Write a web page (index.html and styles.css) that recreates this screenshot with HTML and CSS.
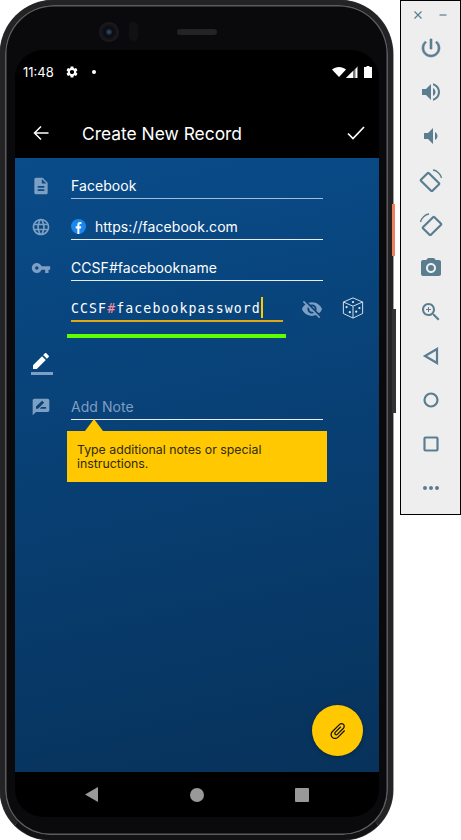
FILE: index.html
```html
<!DOCTYPE html>
<html>
  <head>
    <meta charset="UTF-8">
    <title>Create New Record</title>
    <link rel="stylesheet" href="styles.css">
  </head>

  <body>
    <div id="stage">
      <div id="phone">
        <div class="side-key side-key--orange"></div>
        <div class="side-key side-key--dark"></div>
        <div id="bezel-top">
          <div class="camera"></div>
          <div class="sensor"></div>
          <div class="speaker"></div>
        </div>

        <div id="screen">
          <div id="status">
            <span class="clock">11:48</span>
            <svg class="status__gear" viewBox="0 0 24 24"><path d="M19.14 12.94c.04-.3.06-.61.06-.94 0-.32-.02-.64-.07-.94l2.03-1.58c.18-.14.23-.41.12-.61l-1.92-3.32c-.12-.22-.37-.29-.59-.22l-2.39.96c-.5-.38-1.03-.7-1.62-.94l-.36-2.54c-.04-.24-.24-.41-.48-.41h-3.84c-.24 0-.43.17-.47.41l-.36 2.54c-.59.24-1.13.57-1.62.94l-2.39-.96c-.22-.08-.47 0-.59.22L2.74 8.87c-.12.21-.08.47.12.61l2.03 1.58c-.05.3-.09.63-.09.94s.02.64.07.94l-2.03 1.58c-.18.14-.23.41-.12.61l1.92 3.32c.12.22.37.29.59.22l2.39-.96c.5.38 1.03.7 1.62.94l.36 2.54c.05.24.24.41.48.41h3.84c.24 0 .44-.17.47-.41l.36-2.54c.59-.24 1.13-.56 1.62-.94l2.39.96c.22.08.47 0 .59-.22l1.92-3.32c.12-.22.07-.47-.12-.61l-2.01-1.58zM12 15.6c-1.98 0-3.6-1.62-3.6-3.6s1.62-3.6 3.6-3.6 3.6 1.62 3.6 3.6-1.62 3.6-3.6 3.6z"/></svg>
            <span class="status__dot"></span>
            <span class="status__space"></span>
            <svg class="status__wifi" viewBox="0 0 14 10"><path d="M0 2.6C2 1 4.400 0 7 0s5 1 7 2.600L7 10z"/></svg>
            <svg class="status__signal" viewBox="0 0 12 12"><path d="M12 0v12H0z" fill="#777"/><path d="M7 5v7H0z"/><path d="M11 1.500v10.500H9.500V3z"/></svg>
            <svg class="status__battery" viewBox="0 0 8 12"><path d="M2.500 0h3v1H8v11H0V1h2.500z"/></svg>
          </div>

          <div id="appbar">
            <svg class="appbar__back" viewBox="0 0 16 16"><path d="M15.500 8H1.500M8 1.500 1.500 8 8 14.500"/></svg>
            <div class="appbar__title">Create New Record</div>
            <svg class="appbar__ok" viewBox="0 0 18 14"><path d="M1 7.500 6 12.500 17 1"/></svg>
          </div>

          <div id="content">
            <div class="row">
              <svg class="row__icon" viewBox="0 0 24 24"><path d="M14 2H6c-1.100 0-1.990.9-1.990 2L4 20c0 1.100.89 2 1.990 2H18c1.100 0 2-.9 2-2V8l-6-6zm2 16H8v-2h8v2zm0-4H8v-2h8v2zm-3-5V3.500L18.500 9H13z"/></svg>
              <div class="field field--title">Facebook</div>
            </div>
            <div class="row">
              <svg class="row__icon" viewBox="0 0 24 24"><path d="M11.990 2C6.470 2 2 6.480 2 12s4.470 10 9.990 10C17.520 22 22 17.520 22 12S17.520 2 11.990 2zm6.930 6h-2.950c-.32-1.250-.78-2.450-1.380-3.560 1.840.63 3.370 1.910 4.330 3.560zM12 4.040c.83 1.200 1.480 2.530 1.910 3.960h-3.820c.43-1.430 1.080-2.760 1.910-3.960zM4.260 14C4.100 13.360 4 12.690 4 12s.1-1.360.26-2h3.380c-.08.66-.14 1.320-.14 2 0 .68.06 1.340.14 2H4.260zm.82 2h2.950c.32 1.250.78 2.450 1.380 3.560-1.840-.63-3.370-1.900-4.330-3.560zm2.950-8H5.080c.96-1.660 2.490-2.930 4.330-3.560C8.810 5.550 8.350 6.750 8.030 8zM12 19.960c-.83-1.200-1.480-2.530-1.910-3.960h3.820c-.43 1.430-1.080 2.760-1.910 3.960zM14.340 14H9.660c-.09-.66-.16-1.320-.16-2 0-.68.07-1.350.16-2h4.680c.09.65.16 1.320.16 2 0 .68-.07 1.340-.16 2zm.25 5.560c.6-1.110 1.060-2.310 1.380-3.560h2.950c-.96 1.650-2.490 2.930-4.330 3.560zM16.360 14c.08-.66.14-1.320.14-2 0-.68-.06-1.340-.14-2h3.380c.16.64.26 1.310.26 2s-.1 1.360-.26 2h-3.380z"/></svg>
              <div class="field">
                <svg class="field__fb" viewBox="0 0 16 16"><circle cx="8" cy="8" r="8" fill="#1a86f0"/><path d="M6.800 16V10H5V7.700h1.800V6c0-1.900 1.100-2.900 2.800-2.900.8 0 1.500.1 1.500.1v2h-1c-.9 0-1.200.6-1.200 1.200v1.300h2.100L10.700 10H8.900v6z" fill="#fff"/></svg>
                https://facebook.com
              </div>
            </div>
            <div class="row">
              <svg class="row__icon" viewBox="0 0 24 24"><path d="M12.650 10C11.830 7.670 9.610 6 7 6c-3.310 0-6 2.690-6 6s2.690 6 6 6c2.610 0 4.830-1.670 5.650-4H17v4h4v-4h2v-4H12.650zM7 14c-1.100 0-2-.9-2-2s.9-2 2-2 2 .9 2 2-.9 2-2 2z"/></svg>
              <div class="field">CCSF#facebookname</div>
            </div>
            <div class="row">
              <div class="row__icon"></div>
              <div class="field field--focus">CCSF<span class="hash">#</span>facebookpassword<span class="caret"></span></div>
              <svg class="row__eye" viewBox="0 0 24 24"><path d="M12 7c2.760 0 5 2.240 5 5 0 .65-.13 1.260-.36 1.830l2.920 2.920c1.510-1.260 2.700-2.890 3.430-4.750-1.730-4.390-6-7.500-11-7.500-1.400 0-2.740.25-3.980.7l2.160 2.160C10.740 7.130 11.350 7 12 7zM2 4.270l2.280 2.280.46.46C3.080 8.300 1.780 10.020 1 12c1.730 4.390 6 7.500 11 7.500 1.550 0 3.030-.3 4.380-.84l.42.42L19.730 22 21 20.730 3.270 3 2 4.270zM7.530 9.800l1.550 1.550c-.05.21-.08.43-.08.65 0 1.660 1.340 3 3 3 .22 0 .44-.03.65-.08l1.550 1.550c-.67.33-1.410.53-2.200.53-2.760 0-5-2.240-5-5 0-.79.2-1.530.53-2.200zm4.310-.78 3.150 3.150.02-.16c0-1.660-1.340-3-3-3l-.17.01z"/></svg>
              <svg class="row__dice" viewBox="0 0 24 24" fill="none" stroke="#e4ecf4" stroke-width="1"><path d="M12 1 22.500 5.500V18L12 23 1.500 18V5.500z"/><path d="M1.500 5.500 12 10l10.500-4.500M12 10v13"/><g fill="#e4ecf4" stroke="none"><circle cx="12" cy="5.500" r="1.200"/><circle cx="5" cy="11" r="1.200"/><circle cx="8.500" cy="16.500" r="1.200"/><circle cx="15.500" cy="16" r="1.200"/><circle cx="19" cy="12" r="1.200"/></g></svg>
            </div>
            <div class="strength"></div>
            <div class="row row--pencil">
              <svg class="row__pencil" viewBox="0 0 24 24"><path class="pencil__bar" d="M2 21h22v3H2z"/><path d="M13.060 5.190l3.750 3.750L7.750 18H4v-3.750l9.060-9.060zm4.820 2.680-3.750-3.750 1.830-1.830c.39-.39 1.020-.39 1.410 0l2.340 2.340c.39.39.39 1.020 0 1.410l-1.830 1.830z"/></svg>
            </div>
            <div class="row row--note">
              <svg class="row__icon" viewBox="0 0 24 24"><path d="M20 2H4c-1.100 0-1.990.9-1.990 2L2 22l4-4h14c1.100 0 2-.9 2-2V4c0-1.100-.9-2-2-2zM6 14v-2.470l6.880-6.880c.2-.2.51-.2.71 0l1.770 1.770c.2.2.2.51 0 .71L8.470 14H6zm12 0h-7.500l2-2H18v2z"/></svg>
              <div class="field field--empty">Add Note</div>
            </div>
            <div class="tip">Type additional notes or special instructions.</div>

            <div id="fab">
              <svg viewBox="0 0 24 24"><path transform="rotate(45 12 12)" d="M16.500 6v11.500c0 2.210-1.790 4-4 4s-4-1.790-4-4V5c0-1.380 1.120-2.500 2.500-2.500s2.500 1.120 2.500 2.500v10.500c0 .55-.45 1-1 1s-1-.45-1-1V6H10v9.500c0 1.380 1.120 2.500 2.500 2.500s2.500-1.120 2.500-2.500V5c0-2.210-1.790-4-4-4S7 2.790 7 5v12.500c0 3.040 2.460 5.500 5.500 5.500s5.500-2.460 5.500-5.500V6h-1.500z"/></svg>
            </div>
          </div>

          <div id="navbar">
            <svg viewBox="0 0 14 16"><path d="M14 0v16L0 8z"/></svg>
            <span class="nav__home"></span>
            <span class="nav__recent"></span>
          </div>
        </div>
      </div>

      <div id="tools">
        <div class="tools__head">
          <svg viewBox="0 0 10 10"><path d="M1.500 1.500l7 7M8.500 1.500l-7 7"/></svg>
          <svg viewBox="0 0 10 10"><path d="M1.500 5h7"/></svg>
        </div>
        <svg class="tool tool--heavy" viewBox="0 0 24 24"><path d="M13 3h-2v10h2V3zm4.830 2.170-1.420 1.420C17.990 7.860 19 9.810 19 12c0 3.870-3.130 7-7 7s-7-3.130-7-7c0-2.190 1.010-4.140 2.580-5.420L6.170 5.170C4.230 6.820 3 9.260 3 12c0 4.970 4.030 9 9 9s9-4.030 9-9c0-2.740-1.230-5.180-3.170-6.830z"/></svg>
        <svg class="tool" viewBox="0 0 24 24"><path d="M3 9v6h4l5 5V4L7 9H3zm13.500 3c0-1.770-1.020-3.290-2.500-4.030v8.050c1.480-.73 2.500-2.250 2.500-4.020zM14 3.230v2.060c2.890.86 5 3.540 5 6.710s-2.110 5.850-5 6.710v2.060c4.010-.91 7-4.490 7-8.770s-2.990-7.860-7-8.770z"/></svg>
        <svg class="tool" viewBox="0 0 24 24"><path d="M5 9v6h4l5 5V4L9 9H5zm13.500 3c0-1.770-1.020-3.290-2.500-4.030v8.050c1.480-.73 2.500-2.250 2.500-4.020z"/></svg>
        <svg class="tool tool--line" viewBox="0 0 24 24"><rect transform="rotate(-45 11 14)" x="5.500" y="6" width="11" height="16" rx="1"/><path class="tool__arc" d="M14 2c4 .4 7.600 4 8.500 8"/></svg>
        <svg class="tool tool--line" viewBox="0 0 24 24"><rect transform="rotate(45 13 14)" x="7.500" y="6" width="11" height="16" rx="1"/><path class="tool__arc" d="M10 2C6 2.400 2.400 6 1.500 10"/></svg>
        <svg class="tool" viewBox="0 0 24 24"><path d="M9 2 7.170 4H4c-1.100 0-2 .9-2 2v12c0 1.100.9 2 2 2h16c1.100 0 2-.9 2-2V6c0-1.100-.9-2-2-2h-3.170L15 2H9zm3 15c-2.760 0-5-2.240-5-5s2.240-5 5-5 5 2.240 5 5-2.240 5-5 5zm0-8a3 3 0 1 0 0 6 3 3 0 0 0 0-6z"/></svg>
        <svg class="tool" viewBox="0 0 24 24"><path d="M15.500 14h-.79l-.28-.27C15.410 12.590 16 11.110 16 9.500 16 5.910 13.090 3 9.500 3S3 5.910 3 9.500 5.910 16 9.500 16c1.610 0 3.090-.59 4.230-1.570l.27.28v.79l5 4.990L20.490 19l-4.990-5zm-6 0C7.010 14 5 11.990 5 9.500S7.010 5 9.500 5 14 7.010 14 9.500 11.990 14 9.500 14zM10 7H9v2H7v1h2v2h1v-2h2V9h-2z"/></svg>
        <svg class="tool tool--line" viewBox="0 0 24 24"><path d="M18 5 6 12l12 7z"/></svg>
        <svg class="tool tool--line" viewBox="0 0 24 24"><circle cx="12" cy="12" r="6.500"/></svg>
        <svg class="tool tool--line" viewBox="0 0 24 24"><rect x="5.500" y="5.500" width="13" height="13" rx="1"/></svg>
        <svg class="tool" viewBox="0 0 24 24"><circle cx="6" cy="12" r="2"/><circle cx="12" cy="12" r="2"/><circle cx="18" cy="12" r="2"/></svg>
      </div>
    </div>
  </body>
</html>
```

FILE: styles.css
```css
* {
  box-sizing: border-box;
  font-family: 'Inter', 'Noto Sans', sans-serif;
}
html, body {
  margin: 0;
  padding: 0;
  width: 461px;
  height: 840px;
  overflow: hidden;
  background: #fff;
}
svg {
  display: block;
  flex: none;
}

#stage {
  display: flex;
  align-items: flex-start;
  height: 840px;
}

/* phone body */
#phone {
  position: relative;
  width: 393px;
  height: 840px;
  padding: 0 9px 0 10px;
  display: flex;
  flex-direction: column;
  background: #0a0a0c;
  border: 5px solid #232325;
  border-bottom-color: #121214;
  border-radius: 54px 54px 50px 50px;
  box-shadow: inset 0 0 0 1.500px #5c5c5f, 0 0 0 0.500px #444;
}
.side-key {
  position: absolute;
  right: -7px;
  width: 3px;
}
.side-key--orange {
  top: 199px;
  height: 52px;
  background: #ee8060;
}
.side-key--dark {
  top: 304px;
  height: 104px;
  width: 4px;
  right: -8px;
  background: #333;
}

#bezel-top {
  position: relative;
  height: 45px;
  flex: none;
}
.camera {
  position: absolute;
  left: 84px;
  top: 17px;
  width: 20px;
  height: 20px;
  border-radius: 50%;
  background: radial-gradient(circle at 50% 50%, #3a5578 0, #0a0a10 28%, #1c1c20 70%, #141416 100%);
}
.sensor {
  position: absolute;
  left: 114px;
  top: 17px;
  width: 9px;
  height: 19px;
  border-radius: 5px;
  background: #111114;
}
.speaker {
  position: absolute;
  left: 162px;
  top: 24px;
  width: 40px;
  height: 6px;
  border-radius: 3px;
  background: #232326;
}

#screen {
  flex: 1;
  display: flex;
  flex-direction: column;
  background: #000;
  border-radius: 28px;
  margin-bottom: 18px;
  overflow: hidden;
}

/* status bar */
#status {
  height: 44px;
  flex: none;
  display: flex;
  align-items: center;
  padding: 0 7px 0 8px;
  color: #fff;
}
.clock {
  font-size: 13px;
  width: 42px;
}
.status__gear {
  width: 14px;
  height: 14px;
  fill: #fff;
}
.status__dot {
  width: 4px;
  height: 4px;
  margin-left: 13px;
  border-radius: 50%;
  background: #fff;
}
.status__space {
  flex: 1;
}
.status__wifi {
  width: 14px;
  height: 10px;
  fill: #fff;
}
.status__signal {
  width: 12px;
  height: 12px;
  fill: #fff;
  margin-right: 6px;
}
.status__battery {
  width: 8px;
  height: 12px;
  fill: #fff;
}

/* app bar */
#appbar {
  height: 50px;
  margin-top: 14px;
  flex: none;
  display: flex;
  align-items: center;
  padding: 0 14px 0 18px;
  color: #fff;
}
.appbar__back {
  width: 16px;
  height: 16px;
  fill: none;
  stroke: #fff;
  stroke-width: 1.500px;
}
.appbar__title {
  flex: 1;
  margin-left: 33px;
  font-size: 17.400px;
  font-weight: 400;
}
.appbar__ok {
  width: 18px;
  height: 14px;
  fill: none;
  stroke: #fff;
  stroke-width: 1.700px;
}

/* form */
#content {
  position: relative;
  flex: 1;
  padding-top: 5px;
  background: linear-gradient(168deg, #094c8a 0%, #07325b 100%);
}
.row {
  display: flex;
  align-items: center;
  height: 41px;
  padding-left: 16px;
}
.row__icon {
  width: 20px;
  height: 20px;
  margin-top: 5px;
  margin-right: 20px;
  fill: #7d9fc3;
}
.field {
  display: flex;
  align-items: center;
  width: 252px;
  height: 31px;
  padding-top: 4px;
  color: #fff;
  font-size: 14px;
  letter-spacing: 0.050px;
  border-bottom: 1.500px solid #e4ecf4;
}
.field--title {
  border-bottom-color: #a3bcd8;
}
.field__fb {
  width: 15px;
  height: 15px;
  margin-right: 9px;
}
.field--focus {
  width: 212px;
  padding-top: 6px;
  font-family: 'DejaVu Sans Mono', monospace;
  font-size: 13.200px;
  letter-spacing: 1.100px;
  border-bottom: 2px solid #e0a815;
}
.field--empty {
  color: #7d9fc3;
}
.hash {
  font-family: inherit;
  color: #f98ea0;
}
.caret {
  width: 2px;
  height: 21px;
  margin-top: -2px;
  background: #ffc800;
}
.row__eye {
  width: 22px;
  height: 22px;
  margin-top: 4px;
  margin-left: 18px;
  fill: #7d9fc3;
}
.row__dice {
  width: 22px;
  height: 22px;
  margin-top: 2px;
  margin-left: 19px;
}
.strength {
  width: 219px;
  height: 4px;
  margin: 7px 0 0 52px;
  background: #5fff00;
}
.row--pencil {
  height: 24px;
  margin-top: 13px;
  padding-left: 14px;
}
.row__pencil {
  width: 24px;
  height: 24px;
  fill: #fff;
}
.pencil__bar {
  fill: #7d9fc3;
}
.row--note {
  margin-top: 9px;
}
.tip {
  position: relative;
  width: 260px;
  height: 51px;
  margin: 6px 0 0 52px;
  padding: 12px 10px 0;
  background: #ffc800;
  color: #2e2a10;
  font-size: 12.300px;
  line-height: 14px;
}
.tip::before {
  content: '';
  position: absolute;
  left: 18px;
  top: -12px;
  border-left: 9px solid transparent;
  border-right: 9px solid transparent;
  border-bottom: 12px solid #ffc800;
}
#fab {
  position: absolute;
  right: 16px;
  bottom: 16px;
  width: 51px;
  height: 51px;
  display: flex;
  align-items: center;
  justify-content: center;
  border-radius: 50%;
  background: #ffc800;
  box-shadow: 0 1px 4px rgba(0,0,0,0.3);
}
#fab svg {
  width: 20px;
  height: 20px;
  fill: #111;
}

/* nav bar */
#navbar {
  height: 45px;
  flex: none;
  display: flex;
  align-items: center;
  justify-content: space-between;
  padding: 0 70px;
}
#navbar svg {
  width: 13px;
  height: 15px;
  fill: #999;
}
.nav__home {
  width: 14px;
  height: 14px;
  border-radius: 50%;
  background: #999;
}
.nav__recent {
  width: 14px;
  height: 14px;
  border-radius: 1px;
  background: #999;
}

/* emulator toolbar */
#tools {
  width: 61px;
  height: 515px;
  margin-left: 7px;
  display: flex;
  flex-direction: column;
  align-items: center;
  gap: 20px;
  background: #eee;
  border: 1px solid #000;
}
.tools__head {
  display: flex;
  gap: 15px;
  margin-top: 9px;
  margin-bottom: -4px;
}
.tools__head svg {
  width: 10px;
  height: 10px;
  fill: none;
  stroke: #5a7e90;
  stroke-width: 1.200px;
}
.tool {
  width: 24px;
  height: 24px;
  fill: #5a7e90;
}
.tool--heavy {
  stroke: #5a7e90;
  stroke-width: 0.600px;
}
.tool--line {
  fill: none;
  stroke: #5a7e90;
  stroke-width: 2.200px;
}
.tool__arc {
  stroke-width: 1.400px;
}
```
